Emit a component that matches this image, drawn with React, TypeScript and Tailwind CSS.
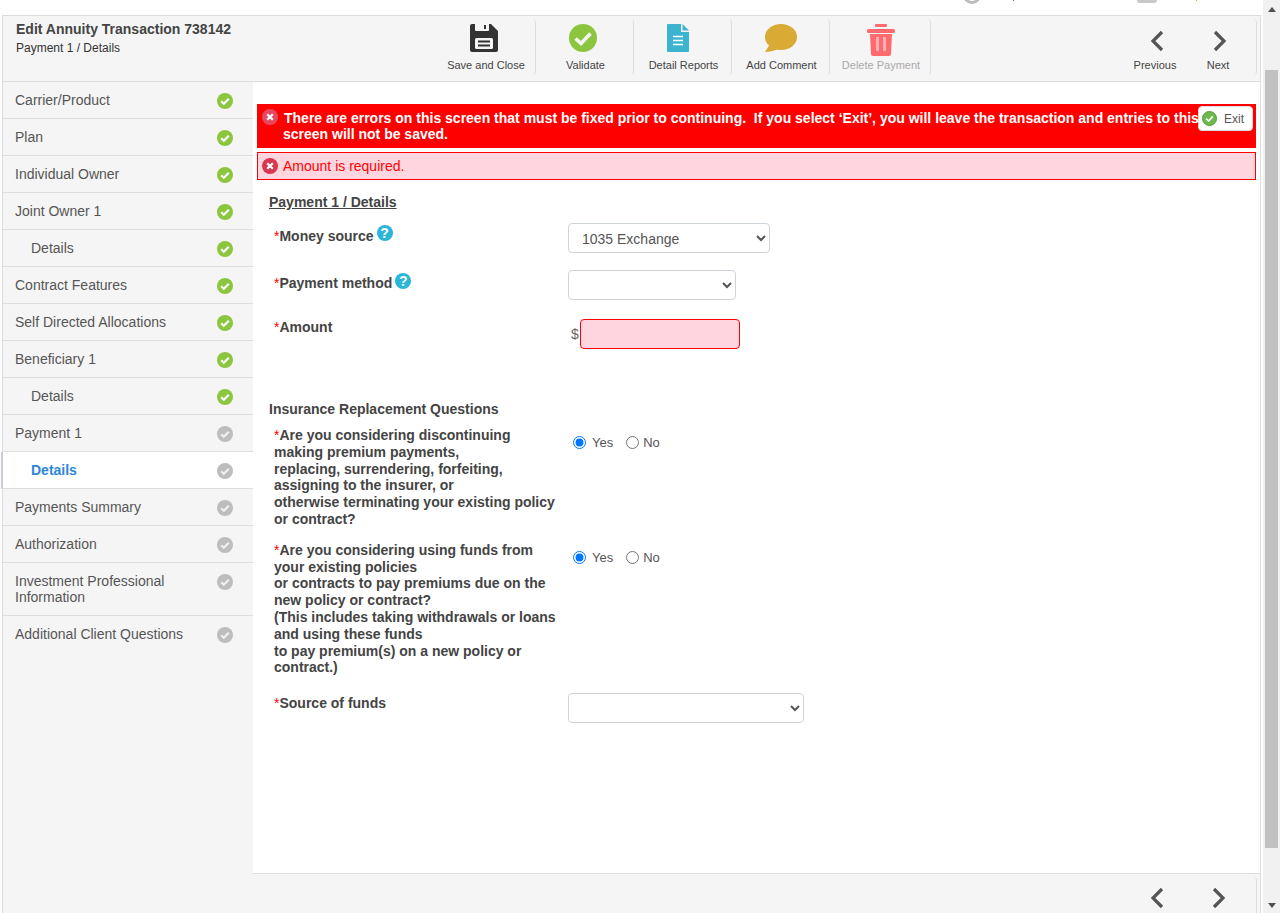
import React from 'react';

function Check({ grey }: { grey?: boolean }) {
  return (
    <svg width="16" height="16" viewBox="0 0 16 16" className="block">
      <circle cx="8" cy="8" r="8" fill={grey ? '#bdbdbd' : '#8cc63f'} />
      <path d="M4.2 8.3l2.6 2.5 5-5" fill="none" stroke={grey ? '#f0f0f0' : '#ffffff'} strokeWidth="2.2" />
    </svg>
  );
}

function ErrorIcon({ light }: { light?: boolean }) {
  return (
    <svg width="16" height="16" viewBox="0 0 16 16" className="block">
      <circle cx="8" cy="8" r="8" fill={light ? '#e8485f' : '#d9364f'} />
      <path d="M5.2 5.2l5.6 5.6M10.8 5.2l-5.6 5.6" stroke="#ffffff" strokeWidth="2.2" />
    </svg>
  );
}

function Help() {
  return (
    <span className="flex h-4 w-4 items-center justify-center rounded-full bg-[#29b6d8] text-[14px] leading-none font-bold text-white">?</span>
  );
}

function Chevron({ dir }: { dir: 'left' | 'right' }) {
  return (
    <svg width="14" height="22" viewBox="0 0 14 22" className="block">
      <path d={dir === 'left' ? 'M12 2L3 11l9 9' : 'M2 2l9 9-9 9'} fill="none" stroke="#555555" strokeWidth="3.2" />
    </svg>
  );
}

function ToolButton({ label, icon, width, iconClass, muted }: { label: string; icon: React.ReactNode; width: string; iconClass?: string; muted?: boolean }) {
  return (
    <div className={`flex h-[56px] flex-col items-center rounded-r-sm border-r border-[#dddddd] pt-[5px] pl-[2px] ${width}`}>
      <div className={`flex h-[28px] items-start justify-center ${iconClass ?? ''}`}>{icon}</div>
      <span className={`mt-[7px] text-[11px] leading-[13px] ${muted ? 'text-[#aaaaaa]' : 'text-[#444444]'}`}>{label}</span>
    </div>
  );
}

const steps = [
  { label: 'Carrier/Product' },
  { label: 'Plan' },
  { label: 'Individual Owner' },
  { label: 'Joint Owner 1' },
  { label: 'Details', sub: true },
  { label: 'Contract Features' },
  { label: 'Self Directed Allocations' },
  { label: 'Beneficiary 1' },
  { label: 'Details', sub: true },
  { label: 'Payment 1', grey: true },
  { label: 'Details', sub: true, grey: true, active: true },
  { label: 'Payments Summary', grey: true },
  { label: 'Authorization', grey: true },
  { label: 'Investment Professional Information', grey: true, tall: true },
  { label: 'Additional Client Questions', grey: true, last: true },
];

function Req({ children }: { children: React.ReactNode }) {
  return (
    <div className="text-[14px] leading-[16.8px] font-bold text-[#444444]">
      <span className="font-normal text-[#ff0000]">*</span>
      {children}
    </div>
  );
}

function YesNo() {
  return (
    <div className="mt-[9px] flex h-[13px] items-center pl-[5px] text-[13px] text-[#555555]">
      <input type="radio" defaultChecked className="m-0 h-[13px] w-[13px] accent-[#0075ff]" />
      <span className="ml-[6px]">Yes</span>
      <input type="radio" className="m-0 ml-[13px] h-[13px] w-[13px]" />
      <span className="ml-[4px]">No</span>
    </div>
  );
}

const selectClass = 'h-[30px] rounded border border-[#ced4da] bg-white pt-[2px] text-[14px] text-[#555555]';

export default function App() {
  return (
    <div className="flex h-[913px] w-[1280px] overflow-hidden bg-white font-['Liberation_Sans',Arial,sans-serif]">
      <div className="flex w-[1263px] flex-col">
        {/* clipped bit of the page header above the frame */}
        <div className="flex h-[15px] shrink-0 items-start overflow-hidden">
          <div className="mt-[-14px] ml-[963px] h-[18px] w-[18px] shrink-0 rounded-full border-[3px] border-[#bbbbbb]" />
          <div className="ml-[32px] h-[1px] w-[1px] shrink-0 bg-[#2d86d9]" />
          <div className="ml-[123px] h-[3px] w-[20px] shrink-0 rounded-b-sm bg-[#c8c8c8]" />
          <div className="ml-[39px] h-[1px] w-[1px] shrink-0 bg-[#e0b050]" />
        </div>

        <div className="ml-[2px] flex min-h-0 w-[1259px] flex-1 flex-col border-x border-t border-[#dddddd]">
          {/* toolbar */}
          <div className="flex h-[66px] shrink-0 border-b border-[#dddddd] bg-[#f5f5f5]">
            <div className="w-[432px] pt-[4px] pl-[13px]">
              <div className="text-[14px] leading-[18px] font-bold text-[#444444]">Edit Annuity Transaction 738142</div>
              <div className="mt-[2px] text-[12px] leading-[16px] text-[#333333]">Payment 1 / Details</div>
            </div>
            <div className="flex pt-[3px]">
              <ToolButton
                width="w-[101px]"
                iconClass="mr-[4px]"
                label="Save and Close"
                icon={
                  <svg width="28" height="28" viewBox="0 0 28 28" className="block">
                    <path d="M2 0h3v6a1 1 0 0 0 1 1h12a1 1 0 0 0 1-1V0h2l7 7v19a2 2 0 0 1-2 2H2a2 2 0 0 1-2-2V2a2 2 0 0 1 2-2z" fill="#333333" />
                    <rect x="14" y="1" width="2" height="4" fill="#333333" />
                    <rect x="5" y="14" width="18" height="11" rx="1.5" fill="#f5f5f5" />
                    <path d="M8 17.5h12M8 21.5h12" stroke="#333333" strokeWidth="2" />
                  </svg>
                }
              />
              <ToolButton
                width="w-[98px]"
                iconClass="mr-[6px]"
                label="Validate"
                icon={
                  <svg width="28" height="28" viewBox="0 0 28 28" className="block">
                    <circle cx="14" cy="14" r="14" fill="#8cc63f" />
                    <path d="M6.5 14.5l5.5 5 9.5-10" fill="none" stroke="#f5f5f5" strokeWidth="3.6" />
                  </svg>
                }
              />
              <ToolButton
                width="w-[98px]"
                iconClass="mr-[12px]"
                label="Detail Reports"
                icon={
                  <svg width="22" height="28" viewBox="0 0 22 28" className="block">
                    <path d="M1 0h13v8h8v19a1 1 0 0 1-1 1H1a1 1 0 0 1-1-1V1a1 1 0 0 1 1-1z" fill="#3cb3cf" />
                    <path d="M15.5 0L22 6.5h-6.5z" fill="#3cb3cf" />
                    <path d="M6 12.5h10M6 16.5h10M6 20.5h10" stroke="#ffffff" strokeWidth="1.6" />
                  </svg>
                }
              />
              <ToolButton
                width="w-[98px]"
                iconClass="mr-[2px]"
                label="Add Comment"
                icon={
                  <svg width="32" height="28" viewBox="0 0 32 28" className="block">
                    <ellipse cx="16" cy="13" rx="16" ry="13" fill="#d9ab34" />
                    <path d="M5 20L0 28c4 0 9-1 13-3z" fill="#d9ab34" />
                  </svg>
                }
              />
              <ToolButton
                width="w-[101px]"
                muted
                label="Delete Payment"
                icon={
                  <svg width="28" height="32" viewBox="0 0 28 32" className="block">
                    <rect x="8" y="0" width="12" height="3" rx="1" fill="#ff6a6f" />
                    <rect x="0" y="5" width="28" height="4" rx="1.5" fill="#ff6a6f" />
                    <path d="M3 10h22l-1 20a2 2 0 0 1-2 2H6a2 2 0 0 1-2-2z" fill="#ff6a6f" />
                    <rect x="9" y="13" width="3" height="14" fill="#ffb0b3" />
                    <rect x="16" y="13" width="3" height="14" fill="#ffb0b3" />
                  </svg>
                }
              />
            </div>
            <div className="mt-[3px] mr-[3px] ml-auto flex h-[56px] justify-end rounded-r-sm border-r border-[#dddddd] pr-[16px]">
              <div className="flex w-[82px] flex-col items-center">
                <div className="ml-[3px] flex h-[33px] items-end"><Chevron dir="left" /></div>
                <span className="mt-[7px] text-[11px] leading-[13px] text-[#444444]">Previous</span>
              </div>
              <div className="flex w-[44px] flex-col items-center">
                <div className="ml-[3px] flex h-[33px] items-end"><Chevron dir="right" /></div>
                <span className="mt-[7px] text-[11px] leading-[13px] text-[#444444]">Next</span>
              </div>
            </div>
          </div>

          <div className="flex min-h-0 flex-1">
            {/* steps */}
            <div className="w-[250px] shrink-0 bg-[#f5f5f5]">
              {steps.map((s, i) => (
                <div
                  key={i}
                  className={`flex pr-[20px] ${s.last ? '' : 'border-b border-[#dddddd]'} ${s.tall ? 'h-[53px]' : 'h-[37px]'} ${s.active ? 'ml-[-2px] border-l-2 border-l-[#c8ccd8] bg-white' : ''}`}
                >
                  <div
                    className={`flex-1 pt-[10px] text-[14px] leading-[16px] ${s.sub ? 'pl-[28px]' : 'pl-[12px]'} ${s.active ? 'font-bold text-[#2d86d9]' : 'text-[#555555]'}`}
                  >
                    {s.tall ? (
                      <>
                        Investment Professional
                        <br />
                        Information
                      </>
                    ) : (
                      s.label
                    )}
                  </div>
                  <div className="pt-[11px]">
                    <Check grey={s.grey} />
                  </div>
                </div>
              ))}
            </div>

            {/* main panel */}
            <div className="flex min-w-0 flex-1 flex-col">
              <div className="min-h-0 flex-1 pt-[22px] pr-[4px] pl-[4px]">
                <div className="relative flex h-[44px] bg-[#ff0000] pt-[5px] pr-[56px] pl-[5px]">
                  <div className="shrink-0"><ErrorIcon light /></div>
                  <p className="mt-[1px] ml-[5px] indent-[1px] text-[14px] leading-[16px] font-bold whitespace-pre-wrap text-white">
                    {'There are errors on this screen that must be fixed prior to continuing.  If you select ‘Exit’, you will leave the transaction and entries to this screen will not be saved.'}
                  </p>
                  <div className="absolute top-[2px] right-[3px] flex h-[25px] w-[55px] items-center rounded border border-[#dddddd] bg-white pl-[3px] text-[12px] text-[#555555]">
                    <svg width="15" height="15" viewBox="0 0 16 16" className="block">
                      <circle cx="8" cy="8" r="7.5" fill="#6db94b" stroke="#4f9a3a" />
                      <path d="M4.5 8.2l2.5 2.5 4.5-5" fill="none" stroke="#ffffff" strokeWidth="1.8" />
                    </svg>
                    <span className="ml-[7px]">Exit</span>
                  </div>
                </div>
                <div className="mt-[4px] flex h-[28px] items-center border border-[#ff0000] bg-[#ffd6e0] pl-[4px]">
                  <ErrorIcon />
                  <span className="ml-[5px] text-[14px] text-[#ff0000]">Amount is required.</span>
                </div>

                <div className="pl-[12px]">
                  <div className="mt-[14px] text-[14px] leading-[16px] font-bold text-[#444444] underline">Payment 1 / Details</div>

                  <div className="mt-[13px] flex pl-[5px]">
                    <div className="flex w-[294px] items-start pt-[2px]">
                      <div className="mt-[3px]"><Req>Money source</Req></div>
                      <span className="ml-[3px]"><Help /></span>
                    </div>
                    <select className={`${selectClass} w-[202px] pl-[9px]`} defaultValue="1035 Exchange">
                      <option>1035 Exchange</option>
                    </select>
                  </div>

                  <div className="mt-[17px] flex pl-[5px]">
                    <div className="flex w-[294px] items-start pt-[3px]">
                      <div className="mt-[2px]"><Req>Payment method</Req></div>
                      <span className="ml-[3px]"><Help /></span>
                    </div>
                    <select className={`${selectClass} w-[168px]`}>
                      <option></option>
                    </select>
                  </div>

                  <div className="mt-[19px] flex pl-[5px]">
                    <div className="w-[297px]">
                      <Req>Amount</Req>
                    </div>
                    <span className="mt-[5px] text-[14px] leading-[20px] text-[#666666]">$</span>
                    <input className="ml-[1px] h-[30px] w-[160px] rounded border border-[#ff0000] bg-[#ffd6e0]" />
                  </div>

                  <div className="mt-[52px] text-[14px] leading-[16px] font-bold text-[#444444]">Insurance Replacement Questions</div>

                  <div className="mt-[10px] flex pl-[5px]">
                    <div className="w-[294px]">
                      <Req>
                        Are you considering discontinuing
                        <br />
                        making premium payments,
                        <br />
                        replacing, surrendering, forfeiting,
                        <br />
                        assigning to the insurer, or
                        <br />
                        otherwise terminating your existing policy
                        <br />
                        or contract?
                      </Req>
                    </div>
                    <YesNo />
                  </div>

                  <div className="mt-[14px] flex pl-[5px]">
                    <div className="w-[294px]">
                      <Req>
                        Are you considering using funds from
                        <br />
                        your existing policies
                        <br />
                        or contracts to pay premiums due on the
                        <br />
                        new policy or contract?
                        <br />
                        (This includes taking withdrawals or loans
                        <br />
                        and using these funds
                        <br />
                        to pay premium(s) on a new policy or
                        <br />
                        contract.)
                      </Req>
                    </div>
                    <YesNo />
                  </div>

                  <div className="mt-[17px] flex pl-[5px]">
                    <div className="w-[294px] pt-[2px]">
                      <Req>Source of funds</Req>
                    </div>
                    <select className={`${selectClass} w-[236px]`}>
                      <option></option>
                    </select>
                  </div>
                </div>
              </div>

              {/* bottom nav */}
              <div className="flex h-[40px] shrink-0 justify-end border-t border-[#dddddd] bg-[#f5f5f5] pr-[3px]">
                <div className="mt-[3px] flex rounded-tr-sm border-r border-[#dddddd] pt-[10px] pr-[30px]">
                  <Chevron dir="left" />
                  <div className="ml-[48px]"><Chevron dir="right" /></div>
                </div>
              </div>
            </div>
          </div>
        </div>
      </div>

      {/* scrollbar */}
      <div className="flex w-[17px] shrink-0 flex-col items-center bg-[#f1f1f1]">
        <div className="mt-[7px] h-0 w-0 border-x-[4px] border-b-[5px] border-x-transparent border-b-[#505050]" />
        <div className="mt-[58px] h-[778px] w-[13px] bg-[#c1c1c1]" />
        <div className="mt-[55px] h-0 w-0 border-x-[4px] border-t-[5px] border-x-transparent border-t-[#505050]" />
      </div>
    </div>
  );
}
